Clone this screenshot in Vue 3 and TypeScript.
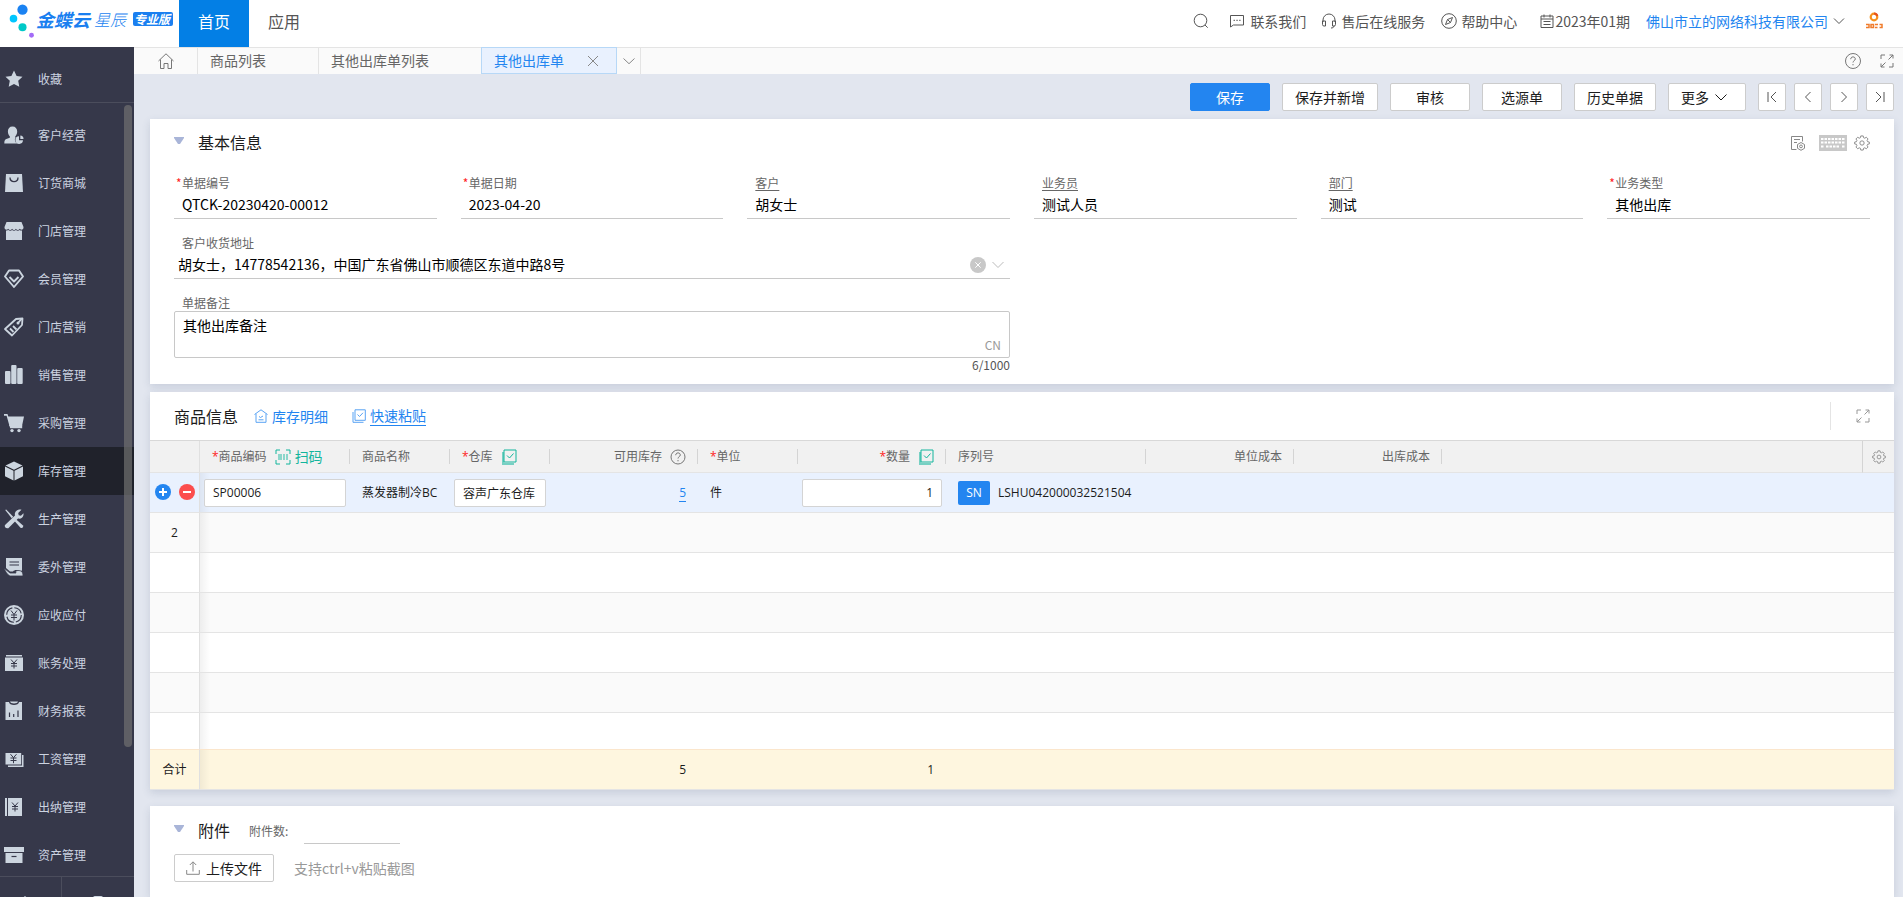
<script setup lang="ts">
import { ref } from 'vue'

interface NavItem {
  label: string
  icon: string
}
interface Field {
  id: string
  label: string
  value: string
  required?: boolean
  link?: boolean
}

const icons: Record<string, string> = {
  star: '<path d="M10 1.500l2.600 5.400 5.900.8-4.300 4.100 1.100 5.900L10 14.900l-5.300 2.800 1.100-5.900L1.500 7.700l5.900-.8z"/>',
  user: '<path d="M8.500 1.500c3 0 4.700 2 4.700 5 0 2.200-.9 3.800-1.900 4.700v1.100l1.700.7v5.500H.3c0-3 .7-4 2.700-4.700l2.800-1.100v-1.500C4.700 10.300 3.900 8.700 3.900 6.500c0-3 1.600-5 4.600-5z"/><circle cx="15.500" cy="14.700" r="4.600" fill="#36384a"/><path d="M15 11.300v4h4a3.800 3.800 0 1 1-4-4z"/><path d="M16.300 10.500a3.800 3.800 0 0 1 3.300 3.500h-3.300z"/>',
  bag: '<path d="M2 1h16l1 18H1z"/><path d="M6 4.500c0 5.500 8 5.500 8 0" fill="none" stroke="#36384a" stroke-width="1.300"/>',
  shop: '<path d="M2.500 1h15L19.500 6c.3 3-2.700 3.500-3.700 1.700-1 1.700-3 1.700-3.900 0-.9 1.700-2.900 1.700-3.800 0-1 1.700-3 1.700-3.900 0C3.200 9.500.2 9 .5 6z"/><path d="M2 9.400c1.200.2 1.800 0 2.300-.4 1.200.9 2.600.9 3.800 0 1.200.9 2.600.9 3.800 0 1.200.9 2.600.9 3.800 0 .6.500 1.300.6 2.300.4V19H2z"/>',
  gem: '<g fill="none" stroke="#ccd5df" stroke-width="1.900" stroke-linejoin="round"><path d="M5 1.500h10l4 6L10 18 1 7.500z"/><path d="M5.500 8l4.500 4.500L14.500 8"/></g>',
  tag: '<g fill="none" stroke="#ccd5df" stroke-width="1.800" stroke-linejoin="round"><path d="M1 12L12 2l6.500-.5-.5 6.500L8 18.500z"/><path d="M13.500 6.500l4.500-5M6 11.500l3.500 3.500M9 9l3.500 3.500"/></g><circle cx="14" cy="6" r="1.500"/>',
  bars: '<rect x="1" y="6" width="5.500" height="13" rx="1"/><rect x="7.200" y="0" width="5.300" height="19" rx="1"/><rect x="13.200" y="3" width="5.500" height="16" rx="1"/>',
  cart: '<path d="M0 1h3.500l.8 2.500H20L18 13H5.500L2.600 2.800H0z"/><path d="M5.200 12h13v3.200h-12z"/><circle cx="8" cy="17.600" r="1.700"/><circle cx="15" cy="17.600" r="1.700"/>',
  box: '<path d="M10 .5l8.500 4L10 8.700 1.500 4.500z"/><path d="M1 5.500l8.500 4.200v9.800L1 15.300zM19 5.500l-8.500 4.200v9.800l8.500-4.200z"/>',
  tools: '<path d="M1.200 1l1-.6 7 7.300-1.500 1.500z"/><path d="M12 10.300l7 6.200c.8 2-1 3-2.500 2.200l-6-6.700z"/><path d="M17.500.8l-3.300 3.300.5 2.200 2.200.5 2.600-2.600c.6 3.800-2.500 6.100-5.500 5.300L4.300 19.200C1.500 20 .2 17.800 1 16L11 6.500C10 3 13.500-.3 17.500.8z"/>',
  hand: '<path d="M2 1h16v12.500l-3 1c-1-2-4.500-2-6 0H6L2 11z"/><path d="M5.500 5h9.500M5.500 8h9.500" stroke="#36384a" stroke-width="1.200"/><path d="M0 11l6 5h6c-1-1.500 0-2.500 2-2.500 3 0 5 1 5 5.500H6.500C4 18.500 1.500 15 0 11z" stroke="#36384a" stroke-width=".8"/>',
  coin: '<circle cx="10" cy="10" r="10"/><circle cx="10" cy="10" r="7.300" fill="none" stroke="#36384a" stroke-width="1.100" stroke-dasharray="9.500 2"/><path d="M7 5.500l3 4 3-4M10 9.500v6M7 10h6M7 12.500h6" fill="none" stroke="#36384a" stroke-width="1"/>',
  ledger: '<path d="M2 2h16v1.600H2zM1 4.400h18V18H1z"/><path d="M7 6.500l3 3.500 3-3.500M10 10v5.500M7 10.500h6M7 13h6" fill="none" stroke="#36384a" stroke-width="1"/>',
  report: '<path d="M1.500 1H5c0 4 10 4 10 0h3v18H1.500z"/><path d="M6 .5h8c0 2.500-8 2.500-8 0z"/><path d="M5.500 16v-4.500M9.700 16v-3M14 16V9.500" stroke="#36384a" stroke-width="1.200"/>',
  wage: '<path d="M1.500 4h15.700v11.500H1.500z"/><path d="M18 6h1.500v12H4v-1.500h14z"/><path d="M6.500 5.200l3 3.500 3-3.500M9.500 8.700v5.500M6.500 9h6M6.500 11.500h6" fill="none" stroke="#36384a" stroke-width="1"/>',
  cashbook: '<path d="M1 1h2v18H1zM4 1h14v18H4z"/><path d="M8 5.500l3 3.500 3-3.500M11 9v5.500M8 9.500h6M8 12h6" fill="none" stroke="#36384a" stroke-width="1"/>',
  archive: '<path d="M0 2h20v5H0z"/><path d="M1.500 8h17v10h-17z"/><path d="M7.500 11.500h5" stroke="#36384a" stroke-width="1.200"/>',
}

const nav: NavItem[] = [
  { label: '客户经营', icon: 'user' },
  { label: '订货商城', icon: 'bag' },
  { label: '门店管理', icon: 'shop' },
  { label: '会员管理', icon: 'gem' },
  { label: '门店营销', icon: 'tag' },
  { label: '销售管理', icon: 'bars' },
  { label: '采购管理', icon: 'cart' },
  { label: '库存管理', icon: 'box' },
  { label: '生产管理', icon: 'tools' },
  { label: '委外管理', icon: 'hand' },
  { label: '应收应付', icon: 'coin' },
  { label: '账务处理', icon: 'ledger' },
  { label: '财务报表', icon: 'report' },
  { label: '工资管理', icon: 'wage' },
  { label: '出纳管理', icon: 'cashbook' },
  { label: '资产管理', icon: 'archive' },
]
const activeNav = ref('库存管理')

const fields = ref<Field[]>([
  { id: 'bill-no', label: '单据编号', value: 'QTCK-20230420-00012', required: true },
  { id: 'bill-date', label: '单据日期', value: '2023-04-20', required: true },
  { id: 'customer', label: '客户', value: '胡女士', link: true },
  { id: 'clerk', label: '业务员', value: '测试人员', link: true },
  { id: 'dept', label: '部门', value: '测试', link: true },
  { id: 'biz-type', label: '业务类型', value: '其他出库', required: true },
])
const address = ref('胡女士，14778542136，中国广东省佛山市顺德区东道中路8号')
const remark = ref('其他出库备注')
const productCode = ref('SP00006')
const warehouse = ref('容声广东仓库')
const quantity = ref('1')
const attachmentCount = ref('')
const emptyRows = ['2', '', '', '', '', '']

const gear =
  '<path d="M6.700 1h2.600l.4 1.900 1.200.5 1.700-1 1.800 1.800-1 1.700.5 1.200 1.900.4v2l-1.900.4-.5 1.200 1 1.700-1.800 1.800-1.700-1-1.200.5-.4 1.900H6.700l-.4-1.900-1.200-.5-1.700 1-1.800-1.800 1-1.700-.5-1.200L.2 9.500v-2l1.900-.4.5-1.200-1-1.700 1.800-1.800 1.700 1 1.200-.5z"/><circle cx="8" cy="8.500" r="2.300"/>'
const expand = '<path d="M1 5V1h4M9.500 1H13v3.500M13 1L8.500 5.500M1 9.500V13h3.500M1 13l4.500-4.500M13 9v4H9"/>'
const stack = '<path d="M3 1h12v12H3z"/><path d="M6 6.500l2.500 2.500 4-4.500"/><path d="M2 3v12h11" stroke-width="2" opacity=".55"/>'
</script>

<template>
  <div class="app">
    <header class="top">
      <div class="brand">
        <svg class="dots" viewBox="0 0 30 40" aria-hidden="true">
          <circle cx="15" cy="8.500" r="5.700" fill="#1a82f2" />
          <circle cx="5" cy="18.500" r="4.200" fill="#00c6ff" />
          <circle cx="15" cy="28" r="4.500" fill="#00c9c8" />
          <circle cx="25" cy="37" r="2.700" fill="#a36bf7" />
        </svg>
        <b class="brand-main">金蝶云</b>
        <span class="brand-sub">星辰</span>
        <span class="edition">专业版</span>
      </div>
      <nav class="modes">
        <a href="#" class="mode on">首页</a>
        <a href="#" class="mode">应用</a>
      </nav>
      <div class="tools">
        <button class="tool search" aria-label="搜索">
          <svg class="line s16" viewBox="0 0 16 16"><circle cx="7.500" cy="7.500" r="6.300" /><path d="M12 12l2.700 2.700" /></svg>
        </button>
        <a href="#" class="tool contact">
          <svg class="line s16" viewBox="0 0 16 16"><path d="M1.500 2.500h13v9.500H4.500l-3 2z" /><path d="M4.500 7.300h1.500M7.300 7.300h1.500M10.100 7.300h1.500" /></svg>联系我们
        </a>
        <a href="#" class="tool service">
          <svg class="line s16" viewBox="0 0 16 16"><path d="M2 9V7a6 6 0 0 1 12 0v2M2 8h2.500v5H3a1.500 1.500 0 0 1-1.500-1.500V8zM14 8h-2.500v5H13a1.500 1.500 0 0 0 1.500-1.500V8zM13 13c0 1.500-1.500 2-3 2" /></svg>售后在线服务
        </a>
        <a href="#" class="tool help">
          <svg class="line s16" viewBox="0 0 16 16"><circle cx="8" cy="8" r="7.300" /><path d="M11.500 4.500L9.500 9.500l-5 2 2-5zM6.500 6.500l3 3" /></svg>帮助中心
        </a>
        <span class="tool period">
          <svg class="line s14" viewBox="0 0 14 14"><path d="M1 2h12v11.500H1zM4 .5v3M10 .5v3M1 5h12M3.500 7.500h7M3.500 10.500h7" /></svg>2023年01期
        </span>
        <a href="#" class="tool company">佛山市立的网络科技有限公司
          <svg class="line s12" viewBox="0 0 12 12"><path d="M1 3.500l5 5 5-5" /></svg>
        </a>
        <svg class="avatar" viewBox="0 0 18 18" aria-hidden="true">
          <circle cx="9" cy="5" r="3.300" fill="none" stroke="#f6921e" stroke-width="2.200" />
          <path d="M9 1.500a3.500 3.500 0 0 1 3.300 2.500" fill="none" stroke="#e8531d" stroke-width="2.200" />
          <path d="M1 12.500h3v3H1M6 12.500h2.500v3H6zM10 12.500h3M10 15.500h2.500M14.500 12.500h2.500v3h-2.500" fill="none" stroke="#f07c2c" stroke-width="1.500" />
        </svg>
      </div>
    </header>

    <div class="body">
      <aside class="side">
        <a href="#" class="nav-item fav">
          <svg class="nav-icon" viewBox="0 0 20 20" v-html="icons.star"></svg>收藏
        </a>
        <nav class="nav-list">
          <a
            v-for="n in nav"
            :key="n.label"
            href="#"
            class="nav-item"
            :class="{ active: n.label === activeNav }"
            @click.prevent="activeNav = n.label"
          >
            <svg class="nav-icon" viewBox="0 0 20 20" v-html="icons[n.icon]"></svg>{{ n.label }}
          </a>
          <span class="scroll-thumb"></span>
        </nav>
        <div class="side-foot">
          <button aria-label="设置"><svg class="nav-icon" viewBox="0 0 20 20"><path d="M10 2l7 6H3z" /></svg></button>
          <button aria-label="收起"><svg class="nav-icon" viewBox="0 0 20 20"><rect x="5" y="2" width="10" height="16" rx="2" /></svg></button>
        </div>
      </aside>

      <main class="main">
        <div class="tabs">
          <a href="#" class="tab home" aria-label="主页">
            <svg class="line s16" viewBox="0 0 16 16"><path d="M.5 8L8 .8 15.500 8M2.500 6.500v9h3.500v-5h4v5h3.500v-9" /></svg>
          </a>
          <a href="#" class="tab list">商品列表</a>
          <a href="#" class="tab other">其他出库单列表</a>
          <div class="tab current">
            <a href="#">其他出库单</a>
            <button aria-label="关闭"><svg class="line s12" viewBox="0 0 12 12"><path d="M1 1l10 10M11 1L1 11" /></svg></button>
          </div>
          <button class="tab more" aria-label="更多标签"><svg class="line s12" viewBox="0 0 12 12"><path d="M.5 3.500L6 8.700l5.500-5.200" /></svg></button>
          <div class="tab-tools">
            <button aria-label="帮助">
              <svg class="line s16" viewBox="0 0 16 16"><circle cx="8" cy="8" r="7.500" /><path d="M5.700 6.200C5.700 3 10.400 3.300 10.300 6c0 1.600-2.300 1.700-2.300 3.500M8 11v1.300" /></svg>
            </button>
            <button aria-label="全屏"><svg class="line s14" viewBox="0 0 14 14" v-html="expand"></svg></button>
          </div>
        </div>

        <div class="actions">
          <button class="btn primary w80">保存</button>
          <button class="btn w96">保存并新增</button>
          <button class="btn w80">审核</button>
          <button class="btn w80">选源单</button>
          <button class="btn w82">历史单据</button>
          <button class="btn w78 drop">更多<svg class="line s12" viewBox="0 0 12 12"><path d="M.5 3.500L6 9l5.500-5.500" /></svg></button>
          <div class="pager">
            <button class="btn sq" aria-label="第一张"><svg class="line s12" viewBox="0 0 12 12"><path d="M2 1v10M10 1L5 6l5 5" /></svg></button>
            <button class="btn sq" aria-label="上一张"><svg class="line s12" viewBox="0 0 12 12"><path d="M8.500 1l-5 5 5 5" /></svg></button>
            <button class="btn sq" aria-label="下一张"><svg class="line s12" viewBox="0 0 12 12"><path d="M3.500 1l5 5-5 5" /></svg></button>
            <button class="btn sq" aria-label="最后一张"><svg class="line s12" viewBox="0 0 12 12"><path d="M10 1v10M2 1l5 5-5 5" /></svg></button>
          </div>
        </div>

        <section class="card basic">
          <div class="card-head">
            <svg class="tri" viewBox="0 0 10 8"><path d="M0 0h10v1L6 7H4L0 1z" /></svg>
            <h2>基本信息</h2>
            <div class="head-tools">
              <button aria-label="单据设置">
                <svg class="line s16" viewBox="0 0 16 16"><path d="M6.500 14.500h-5v-13h11v5M4 4.500h6M4 7.500h3" /><path d="M11 7.500l3.500 2v3.800L11 15.300l-3.500-2V9.500z" /><circle cx="11" cy="11.400" r="1.400" /></svg>
              </button>
              <button aria-label="快捷键">
                <svg class="keyboard" viewBox="0 0 28 16">
                  <path d="M0 0h28v16H0z" fill="#c8c8c8" />
                  <path d="M2 4h24M2 7.500h24M2 11.500h3M7 11.500h14M23 11.500h3" stroke="#fff" stroke-width="2" stroke-dasharray="2.500 1" />
                </svg>
              </button>
              <button aria-label="设置"><svg class="line s16" viewBox="0 0 16 17" v-html="gear"></svg></button>
            </div>
          </div>
          <div class="grid">
            <div v-for="f in fields" :key="f.id" class="field">
              <label :for="f.id"><i v-if="f.required">*</i><span :class="{ link: f.link }">{{ f.label }}</span></label>
              <input :id="f.id" v-model="f.value" type="text" />
            </div>
            <div class="field wide address">
              <label for="address">客户收货地址</label>
              <div class="combo">
                <input id="address" v-model="address" type="text" />
                <button aria-label="清除" @click="address = ''">
                  <svg class="s16" viewBox="0 0 16 16"><circle cx="8" cy="8" r="8" fill="#c8c8c8" /><path d="M5.300 5.300l5.400 5.400M10.700 5.300l-5.400 5.400" stroke="#fff" /></svg>
                </button>
                <button aria-label="选择地址"><svg class="line s12" viewBox="0 0 12 12"><path d="M.5 3l5.500 5.500L11.500 3" /></svg></button>
              </div>
            </div>
            <div class="field wide note">
              <label for="remark">单据备注</label>
              <div class="note-box">
                <textarea id="remark" v-model="remark"></textarea>
                <span class="lang">CN</span>
              </div>
              <div class="count">{{ remark.length }}/1000</div>
            </div>
          </div>
        </section>

        <section class="card goods">
          <div class="goods-head">
            <h2>商品信息</h2>
            <a href="#" class="stock">
              <svg class="line s14" viewBox="0 0 14 14"><path d="M.5 5.500L7 .8l6.500 4.700M2 4.800v8.500h10V4.800M5 7.500l1.500 1 2.500-1.500M4.500 10.800h5" /></svg>库存明细
            </a>
            <a href="#" class="paste">
              <svg class="line s14" viewBox="0 0 14 14"><path d="M3 .8h10.300v10.500H3zM1 3v10.300h10.500M5.500 5.500l2 2 3.500-3.700" /></svg><span>快速粘贴</span>
            </a>
            <button class="full" aria-label="展开表格"><svg class="line s14" viewBox="0 0 14 14" v-html="expand"></svg></button>
          </div>
          <table>
            <colgroup>
              <col class="c50" /><col class="c150" /><col class="c100" /><col class="c100" /><col class="c148" />
              <col class="c100" /><col class="c148" /><col class="c200" /><col class="c148" /><col class="c148" />
              <col /><col class="c32" />
            </colgroup>
            <thead>
              <tr>
                <th class="idx"></th>
                <th class="sep first"><div class="cell"><span><i>*</i>商品编码</span>
                  <button class="scan"><svg class="line s16" viewBox="0 0 16 16"><path d="M1 5V1h4M11 1h4v4M15 11v4h-4M5 15H1v-4" /><path d="M4 5v6M6 5v6M9 5v6M12 5v6" opacity=".6" stroke-width="1.500" /></svg>扫码</button></div></th>
                <th class="sep">商品名称</th>
                <th class="sep"><div class="cell"><span><i>*</i>仓库</span><button class="batch" aria-label="批量填充仓库"><svg class="line s16" viewBox="0 0 16 16" v-html="stack"></svg></button></div></th>
                <th class="sep"><div class="cell end"><span>可用库存</span><svg class="line s16 q" viewBox="0 0 16 16"><circle cx="8" cy="8" r="7" /><path d="M5.700 6.200C5.700 3 10.400 3.300 10.300 6c0 1.600-2.300 1.700-2.300 3.500M8 11v1.300" /></svg></div></th>
                <th class="sep"><i>*</i>单位</th>
                <th class="sep"><div class="cell end"><span><i>*</i>数量</span><button class="batch" aria-label="批量填充数量"><svg class="line s16" viewBox="0 0 16 16" v-html="stack"></svg></button></div></th>
                <th class="sep">序列号</th>
                <th class="sep num">单位成本</th>
                <th class="sep num">出库成本</th>
                <th></th>
                <th class="set"><button aria-label="列设置"><svg class="line s14" viewBox="0 0 16 17" v-html="gear"></svg></button></th>
              </tr>
            </thead>
            <tbody>
              <tr class="current-row">
                <td class="idx">
                  <div class="ops">
                    <button aria-label="添加行"><svg class="s16" viewBox="0 0 16 16"><circle cx="8" cy="8" r="8" fill="#2385f0" /><path d="M8 4v8M4 8h8" stroke="#fff" stroke-width="2" /></svg></button>
                    <button aria-label="删除行"><svg class="s16" viewBox="0 0 16 16"><circle cx="8" cy="8" r="8" fill="#fb4d4d" /><path d="M4 8h8" stroke="#fff" stroke-width="2" /></svg></button>
                  </div>
                </td>
                <td class="edit first"><input v-model="productCode" type="text" aria-label="商品编码" /></td>
                <td class="name">蒸发器制冷BC</td>
                <td class="edit"><input v-model="warehouse" type="text" aria-label="仓库" /></td>
                <td class="num"><a href="#">5</a></td>
                <td>件</td>
                <td class="edit"><input v-model="quantity" class="right" type="text" aria-label="数量" /></td>
                <td><div class="serial"><button class="sn">SN</button>LSHU042000032521504</div></td>
                <td></td><td></td><td></td><td></td>
              </tr>
              <tr v-for="(r, k) in emptyRows" :key="k">
                <td class="idx">{{ r }}</td>
                <td class="first"></td>
                <td colspan="10"></td>
              </tr>
            </tbody>
            <tfoot>
              <tr>
                <td class="idx">合计</td>
                <td class="first"></td><td></td><td></td>
                <td class="num">5</td>
                <td></td>
                <td class="num">1</td>
                <td colspan="5"></td>
              </tr>
            </tfoot>
          </table>
        </section>

        <section class="card files">
          <div class="card-head">
            <svg class="tri" viewBox="0 0 10 8"><path d="M0 0h10v1L6 7H4L0 1z" /></svg>
            <h2>附件</h2>
            <label for="attach-count">附件数:</label>
            <input id="attach-count" v-model="attachmentCount" type="text" />
          </div>
          <div class="upload">
            <button class="btn up"><svg class="line s14" viewBox="0 0 14 14"><path d="M.7 9v4.300h12.600V9M7 10.500V1M3.800 4L7 .8 10.200 4" /></svg>上传文件</button>
            <span>支持ctrl+v粘贴截图</span>
          </div>
        </section>
      </main>
    </div>
  </div>
</template>

<style>
body {
  margin: 0;
  overflow: hidden;
}
</style>

<style scoped>
.app {
  height: 100vh;
  display: flex;
  flex-direction: column;
  overflow: hidden;
  background: #e2e6ef;
  color: #1c1c1c;
  font: 14px/20px "Noto Sans CJK SC", "Open Sans", sans-serif;
}
*, *::before, *::after { box-sizing: border-box; }
a { color: inherit; text-decoration: none; }
button {
  border: 0;
  padding: 0;
  background: none;
  color: inherit;
  font: inherit;
  display: inline-flex;
  align-items: center;
  justify-content: center;
  cursor: pointer;
}
input, textarea {
  font: inherit;
  color: #000;
  border: 0;
  outline: 0;
  min-width: 0;
  background: none;
  border-radius: 0;
}
h2 { margin: 0; font-size: 16px; font-weight: 400; line-height: 24px; }
i { color: #f22; font-style: normal; }
svg { display: block; flex: none; }
.line { fill: none; stroke: currentColor; stroke-width: 1; }
.s12 { width: 12px; height: 12px; }
.s14 { width: 14px; height: 14px; }
.s16 { width: 16px; height: 16px; }

.top { height: 47px; flex: none; display: flex; background: #fff; }
.brand { width: 179px; padding: 0 6px 10px 9px; display: flex; align-items: center; color: #1a7ff0; font-style: italic; white-space: nowrap; }
.dots { width: 27px; height: 40px; align-self: flex-start; }
.brand-main { font-size: 18px; }
.brand-sub { font-size: 16px; font-weight: 300; margin-left: 4px; }
.edition {
  margin-left: auto;
  padding: 0 3px 0 1px;
  background: #1a7ff0;
  color: #fff;
  font-size: 12px;
  font-weight: 700;
  line-height: 14px;
  border-radius: 2px;
}
.modes { display: flex; }
.mode { padding: 9px 19px 0; font-size: 16px; line-height: 24px; color: #555; }
.mode.on { background: #037fe5; color: #fff; }
.tools { margin-left: auto; padding: 0 20px 5px 0; display: flex; align-items: center; color: #555; }
.tool { display: flex; align-items: center; white-space: nowrap; }
.search { margin-right: 20px; }
.contact { gap: 5px; margin-right: 15px; }
.service, .help { gap: 4px; margin-right: 16px; }
.help { margin-right: 23px; }
.period { gap: 1px; margin-right: 16px; }
.company { gap: 5px; color: #2385f0; margin-right: 20px; }
.company .line { color: #555; }
.avatar { width: 18px; height: 18px; }

.body { flex: 1; min-height: 0; display: flex; }
.side { width: 134px; flex: none; display: flex; flex-direction: column; background: #36384a; color: #ccd3e0; font-size: 12px; }
.nav-item { height: 48px; flex: none; display: flex; align-items: center; gap: 14px; padding-left: 4px; }
.nav-icon { width: 20px; height: 20px; fill: #ccd5df; }
.fav { height: 56px; padding-top: 9px; border-bottom: 1px solid #4b4d5c; }
.nav-list { flex: 1; min-height: 0; overflow: hidden; position: relative; padding-top: 8px; }
.nav-item.active { background: #20222b; }
.scroll-thumb { position: absolute; right: 2px; top: 2px; width: 8px; height: 83%; border-radius: 4px; background: rgba(112, 112, 112, 0.7); }
.side-foot { height: 21px; flex: none; display: flex; overflow: hidden; border-top: 1px solid #4b4d5c; }
.side-foot button { width: 61px; padding: 17px 12px 0 0; align-items: flex-start; }
.side-foot button + button { flex: 1; border-left: 1px solid #4b4d5c; padding-right: 0; }

.main { flex: 1; min-width: 0; display: flex; flex-direction: column; }
.tabs { height: 27px; flex: none; display: flex; background: #fafafa; border-top: 1px solid #e4e4e4; color: #666; }
.tab { display: flex; align-items: center; padding: 0 12px 2px; border-right: 1px solid #e4e4e4; }
.tab.home { width: 64px; justify-content: center; padding: 0; color: #777; }
.tab.list { width: 121px; }
.tab.other { width: 162px; border-right: 0; }
.tab.current { width: 136px; margin-top: -1px; border: 1px solid #b7d8f7; background: #e9f1fe; color: #2385f0; justify-content: space-between; padding: 0 17px 0 12px; }
.tab.current a { padding-bottom: 1px; }
.tab.current button, .tab.more { color: #888; }
.tab.more { width: 24px; padding: 0; }
.tab-tools { margin-left: auto; display: flex; align-items: center; gap: 19px; padding-right: 9px; color: #777; }

.actions { display: flex; justify-content: flex-end; gap: 12px; padding: 9px 9px 8px; }
.btn { height: 28px; border: 1px solid #ccc; border-radius: 2px; background: #fff; color: #1c1c1c; white-space: nowrap; }
.btn.primary { background: #2385f0; border-color: #2385f0; color: #fff; }
.w78 { width: 78px; }
.w80 { width: 80px; }
.w82 { width: 82px; }
.w96 { width: 96px; }
.drop { gap: 6px; padding-right: 6px; }
.sq { width: 28px; color: #555; }
.pager { display: flex; gap: 8px; }

.card { margin: 0 9px 0 16px; background: #fff; box-shadow: 0 3px 8px rgba(60, 80, 120, 0.16); flex: none; }
.card-head { display: flex; align-items: center; }
.card-head h2 { padding-bottom: 2px; }
.tri { width: 10px; height: 8px; margin: 0 14px 5px 0; fill: #a9b5d8; }
.basic { padding: 11px 24px 12px; }
.head-tools { margin-left: auto; display: flex; align-items: center; color: #888; }
.head-tools button:nth-child(2) { margin: 0 7px 0 13px; }
.keyboard { width: 28px; height: 16px; }
.grid { display: grid; grid-template-columns: repeat(6, 1fr); column-gap: 24px; margin-top: 17px; }
.field { display: flex; flex-direction: column; position: relative; }
.field label { padding-left: 8px; font-size: 12px; line-height: 20px; color: #666; display: flex; }
.field label i { width: 6px; margin-left: -6px; }
.link { text-decoration: underline; text-underline-offset: 2px; }
.field input { height: 26px; padding: 0 8px 3px; border-bottom: 1px solid #c8c8c8; width: 100%; }
.wide { grid-column: span 3; margin-top: 14px; }
.combo { display: flex; align-items: center; gap: 6px; border-bottom: 1px solid #c8c8c8; padding-right: 6px; height: 26px; color: #bbb; }
.combo button { padding-bottom: 1px; }
.combo input { flex: 1; height: 25px; padding: 0 4px 3px; border: 0; }
.note { grid-row: 3; }
.note label { padding-top: 2px; line-height: 16px; }
.note-box { position: relative; height: 47px; }
.note textarea { display: block; width: 100%; height: 47px; resize: none; border: 1px solid #c8c8c8; border-radius: 2px; padding: 3px 8px; overflow: hidden; }
.lang { position: absolute; right: 9px; bottom: 3px; font-size: 12px; color: #999; }
.count { text-align: right; font-size: 12px; line-height: 14px; color: #555; }

.goods { margin-top: 8px; }
.goods-head { height: 48px; display: flex; align-items: center; padding: 0 24px; color: #2385f0; }
.goods-head h2 { color: #1c1c1c; }
.goods-head a { display: flex; align-items: center; gap: 4px; padding-bottom: 1px; }
.goods-head .line { opacity: 0.75; }
.stock { margin-left: 16px; }
.paste { margin-left: 24px; }
.paste span { border-bottom: 1px solid #2385f0; }
.full { margin-left: auto; height: 28px; padding-left: 25px; border-left: 1px solid #e4e4e4; color: #777; }

table { width: 100%; table-layout: fixed; border-collapse: separate; border-spacing: 0; font: 12px/20px "Open Sans", "Noto Sans CJK SC", sans-serif; border-top: 1px solid #d8d8d8; }
.c32 { width: 32px; }
.c50 { width: 50px; }
.c100 { width: 100px; }
.c148 { width: 148px; }
.c150 { width: 150px; }
.c200 { width: 200px; }
th, td { padding: 0 12px; text-align: left; font-weight: 400; white-space: nowrap; border-bottom: 1px solid #e4e4e4; height: 40px; }
th { height: 32px; background-color: #f1f1f1; color: #666; background-repeat: no-repeat; }
th.sep { background-image: linear-gradient(#d4d4d4, #d4d4d4); background-position: right center; background-size: 1px 15px; }
.cell { display: flex; align-items: center; gap: 8px; }
.end { justify-content: flex-end; }
.scan { gap: 4px; font-size: 14px; color: #13b59c; }
.batch { color: #13b59c; }
.q { color: #777; }
th.set { padding: 0; text-align: center; border-left: 1px solid #d4d4d4; color: #888; }
th.set button { vertical-align: middle; }
.num { text-align: right; }
td.num a { color: #2385f0; border-bottom: 1px solid #2385f0; }
.idx { padding: 0; text-align: center; border-right: 1px solid #e0e0e0; }
td.first { background-image: linear-gradient(90deg, rgba(0, 0, 0, 0.05), rgba(0, 0, 0, 0) 10px); }
tbody td { background-color: #fff; }
tbody tr:nth-child(even) td { background-color: #fafafa; }
tbody .current-row td { background-color: #e9f1fe; }
tbody tr:last-child td { height: 37px; border-bottom-color: #fbe6cc; }
td.name { padding-right: 0; }
.ops { display: flex; justify-content: center; gap: 8px; padding-bottom: 1px; }
td.edit { padding: 0 4px; }
td.edit input { display: block; width: 100%; height: 28px; padding: 0 8px; background: #fff; border: 1px solid #d4d4d4; border-radius: 2px; color: #1c1c1c; }
td.edit .right { text-align: right; }
.serial { display: flex; align-items: center; gap: 8px; }
.sn { width: 32px; height: 24px; background: #2385f0; color: #fff; border-radius: 2px; }
tfoot td { background-color: #fef6df; }

.files { margin-top: 16px; padding: 12px 24px; flex: 1 0 auto; }
.files .card-head { height: 26px; }
.files label { margin-left: 19px; font-size: 12px; color: #666; }
.files input { width: 96px; height: 26px; margin-left: 16px; border-bottom: 1px solid #c8c8c8; }
.upload { display: flex; align-items: center; gap: 20px; margin-top: 10px; color: #999; }
.up { width: 100px; gap: 6px; }
.up .line { color: #888; }
</style>
